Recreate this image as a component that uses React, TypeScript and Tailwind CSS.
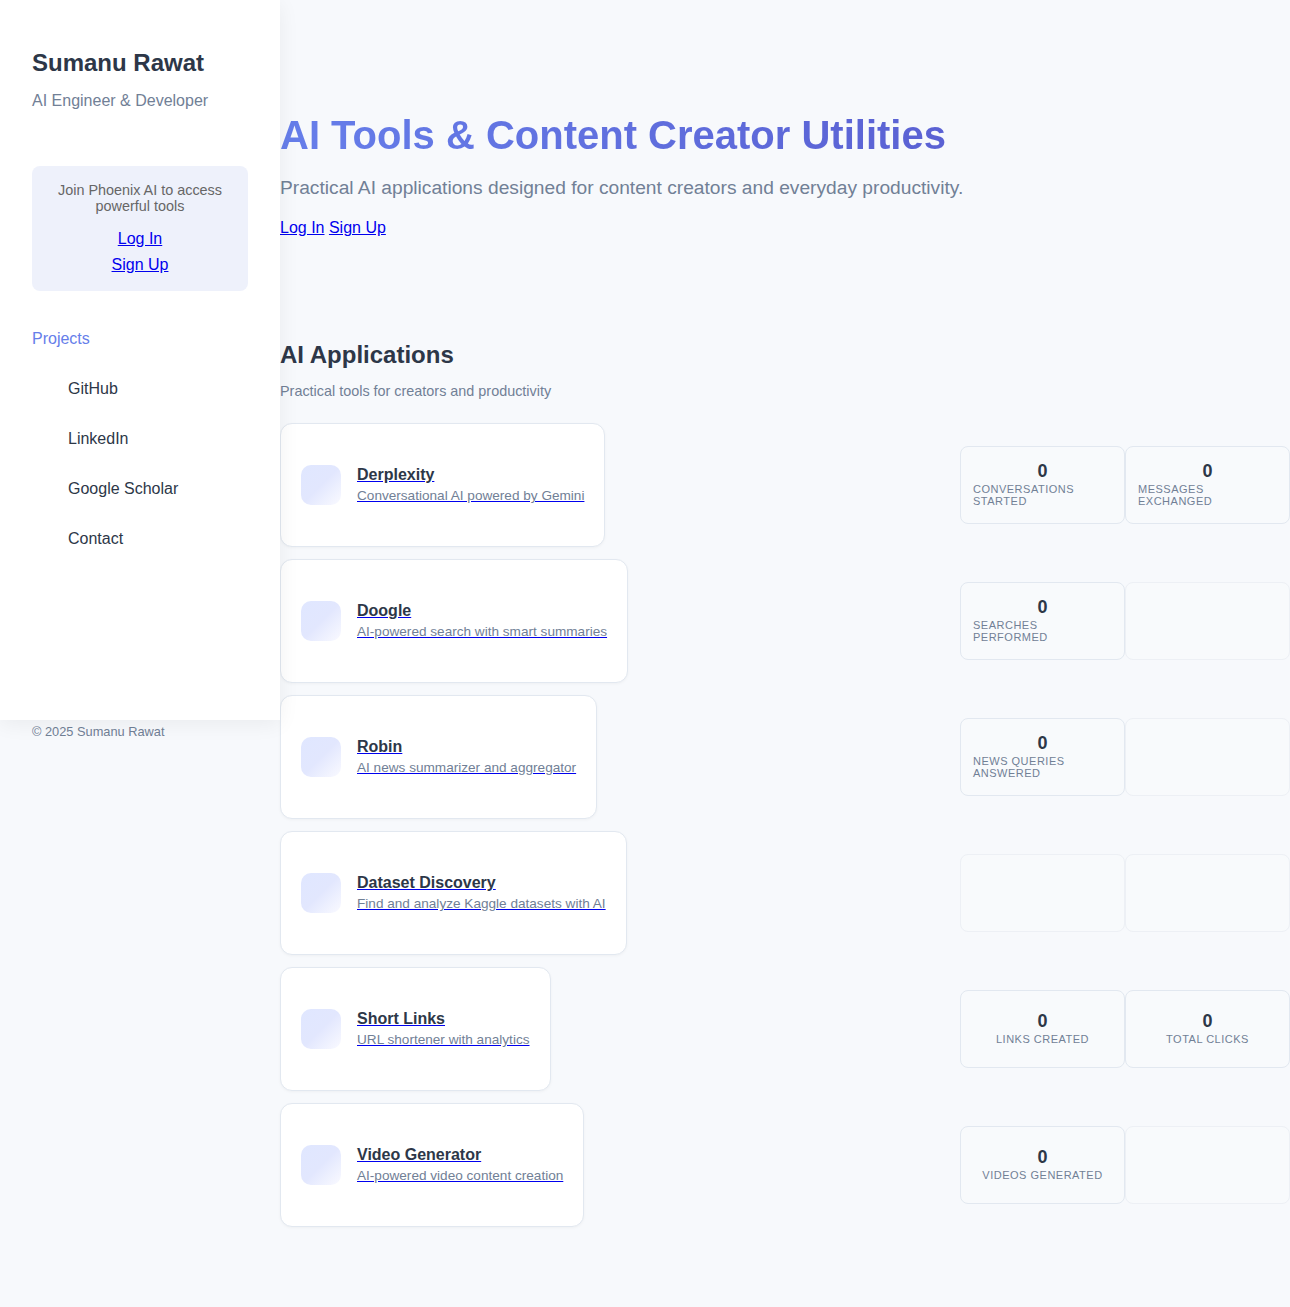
import React from "react";

type Stat = { value?: string; label?: string };
type App = { title: string; desc: string; stats: [Stat, Stat] };

const apps: App[] = [
  { title: "Derplexity", desc: "Conversational AI powered by Gemini", stats: [{ value: "0", label: "Conversations Started" }, { value: "0", label: "Messages Exchanged" }] },
  { title: "Doogle", desc: "AI-powered search with smart summaries", stats: [{ value: "0", label: "Searches Performed" }, {}] },
  { title: "Robin", desc: "AI news summarizer and aggregator", stats: [{ value: "0", label: "News Queries Answered" }, {}] },
  { title: "Dataset Discovery", desc: "Find and analyze Kaggle datasets with AI", stats: [{}, {}] },
  { title: "Short Links", desc: "URL shortener with analytics", stats: [{ value: "0", label: "Links Created" }, { value: "0", label: "Total Clicks" }] },
  { title: "Video Generator", desc: "AI-powered video content creation", stats: [{ value: "0", label: "Videos Generated" }, {}] },
];

function StatCard({ s }: { s: Stat }) {
  if (!s.value) {
    return <div className="h-[78px] rounded-lg border border-[#edf0f5] bg-[#f8fafc]" />;
  }
  return (
    <div className="flex h-[78px] flex-col items-center justify-center rounded-lg border border-[#e2e8f0] bg-[#f8fafc] px-3 pb-[2px]">
      <div className="text-[18px] font-bold leading-[20px] text-[#2d3748]">{s.value}</div>
      <div className="mt-0.5 text-left text-[11px] uppercase leading-[12px] tracking-[0.5px] text-[#718096]">{s.label}</div>
    </div>
  );
}

export default function AppPage() {
  return (
    <div
      className="flex min-h-[1307px] w-full bg-[#f7f9fc]"
      style={{ fontFamily: '"Liberation Sans", Arial, sans-serif' }}
    >
      <aside className="w-[280px] shrink-0">
        <div className="relative z-10 flex h-[720px] flex-col bg-white px-8 pt-12 shadow-[0_4px_20px_rgba(0,0,0,0.06)]">
          <h1 className="text-[24px] font-bold leading-[29px] text-[#2d3748]">Sumanu Rawat</h1>
          <p className="mt-[14px] text-[16px] leading-[19px] text-[#718096]">AI Engineer &amp; Developer</p>
          <div className="mt-[56px] flex flex-col items-center rounded-lg bg-[#eef1fb] px-4 pb-[17px] pt-4 text-center">
            <p className="text-[14.4px] leading-[16px] text-[#666666]">Join Phoenix AI to access powerful tools</p>
            <div className="mt-[15px] flex flex-col items-center gap-[7px] text-[16px] leading-[19px]">
              <a href="#" className="text-[#0000ee] underline">Log In</a>
              <a href="#" className="text-[#0000ee] underline">Sign Up</a>
            </div>
          </div>
          <nav className="mt-[38px] flex flex-col text-[16px] leading-[19px]">
            <div className="text-[#667eea]">Projects</div>
            <div className="mt-[31px] flex flex-col gap-[31px] pl-9 text-[#2d3748]">
              <span>GitHub</span>
              <span>LinkedIn</span>
              <span>Google Scholar</span>
              <span>Contact</span>
            </div>
          </nav>
        </div>
        <p className="mt-[4px] px-8 text-[12.8px] leading-[15px] text-[#718096]">© 2025 Sumanu Rawat</p>
      </aside>

      <main className="flex-1 pt-[111px]">
        <h2 className="w-fit bg-gradient-to-r from-[#667eea] to-[#5a61d3] bg-clip-text text-[40px] font-bold leading-[48px] text-transparent">
          AI Tools &amp; Content Creator Utilities
        </h2>
        <p className="mt-[18px] text-[19.2px] leading-[22px] text-[#718096]">
          Practical AI applications designed for content creators and everyday productivity.
        </p>
        <div className="mt-[19px] text-[16px] leading-[19px]">
          <a href="#" className="text-[#0000ee] underline">Log In</a>{" "}
          <a href="#" className="text-[#0000ee] underline">Sign Up</a>
        </div>

        <section className="mt-[103px]">
          <h3 className="text-[24px] font-bold leading-[29px] text-[#2d3748]">AI Applications</h3>
          <p className="mt-[14px] text-[14.4px] leading-[17px] text-[#718096]">Practical tools for creators and productivity</p>
          <div className="mt-[23px] flex flex-col gap-3">
            {apps.map((a) => (
              <div key={a.title} className="flex items-center justify-between">
                <a
                  href="#"
                  className="flex items-center gap-4 rounded-xl border border-[#e2e8f0] bg-white px-5 py-[41px] text-[#0000ee] underline shadow-[0_1px_3px_rgba(0,0,0,0.04)]"
                >
                  <div className="h-10 w-10 shrink-0 rounded-[10px] bg-gradient-to-br from-[#e0e7ff] via-[#e2e7fe] to-[#fafaff]" />
                  <div className="flex flex-col">
                    <span className="text-[16px] font-bold leading-[18px] text-[#2d3748]">{a.title}</span>
                    <span className="mt-[4px] text-[13.6px] leading-[16px] text-[#718096]">{a.desc}</span>
                  </div>
                </a>
                <div className="grid w-[330px] grid-cols-2">
                  <StatCard s={a.stats[0]} />
                  <StatCard s={a.stats[1]} />
                </div>
              </div>
            ))}
          </div>
        </section>
      </main>
    </div>
  );
}
